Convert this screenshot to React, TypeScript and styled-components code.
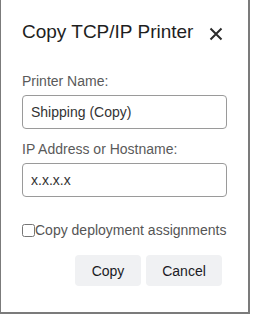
import React from "react";
import styled, { createGlobalStyle } from "styled-components";

const Global = createGlobalStyle`
  html, body { margin: 0; padding: 0; background: #fff; overflow: hidden; }
  body { font-family: "Liberation Sans", Arial, sans-serif; }
  * { box-sizing: border-box; }
`;

const Dialog = styled.div`
  width: 251px;
  height: 316px;
  margin: -2px 0 0 -1px;
  border: 2px solid #7b7b7b;
  background: #fff;
  padding: 18px 21px 0 21px;
  display: flex;
  flex-direction: column;
`;

const Header = styled.div`
  display: flex;
  align-items: center;
  justify-content: space-between;
  height: 28px;
`;

const Title = styled.h2`
  margin: 0;
  font-size: 19px;
  font-weight: 400;
  color: #1e1e1e;
`;

const CloseButton = styled.button`
  border: 0;
  background: none;
  padding: 0;
  margin-right: 4px;
  margin-top: 4px;
  width: 14px;
  height: 14px;
  display: flex;
  cursor: pointer;
`;

const Field = styled.div<{ $top: number }>`
  display: flex;
  flex-direction: column;
  margin-top: ${(p) => p.$top}px;
`;

const Label = styled.label`
  font-size: 14px;
  color: #5a5a5a;
  line-height: 16px;
  margin-bottom: 6px;
`;

const Input = styled.input`
  width: 205px;
  height: 34px;
  border: 1px solid #9a9a9a;
  border-radius: 4px;
  padding: 0 8px;
  font-family: "Liberation Sans", Arial, sans-serif;
  font-size: 14px;
  color: #333;
  outline: none;
`;

const CheckRow = styled.label`
  display: flex;
  align-items: center;
  margin-top: 25px;
  font-size: 14px;
  color: #555;
  line-height: 16px;
`;

const Check = styled.input`
  width: 13px;
  height: 13px;
  margin: 0;
`;

const Actions = styled.div`
  display: flex;
  justify-content: flex-end;
  gap: 5px;
  margin-top: 17px;
  padding-right: 5px;
`;

const Button = styled.button<{ $w: number }>`
  width: ${(p) => p.$w}px;
  height: 31px;
  border: 0;
  border-radius: 4px;
  background: #f0f1f3;
  font-family: "Liberation Sans", Arial, sans-serif;
  font-size: 14px;
  color: #1a1a24;
  cursor: pointer;
`;

export default function App() {
  return (
    <>
      <Global />
      <Dialog>
        <Header>
          <Title>Copy TCP/IP Printer</Title>
          <CloseButton aria-label="Close">
            <svg width="14" height="14" viewBox="0 0 14 14">
              <path d="M1.5 1.5 L12.5 12.5 M12.5 1.5 L1.5 12.5" stroke="#2b2b2b" strokeWidth="2" />
            </svg>
          </CloseButton>
        </Header>
        <Field $top={27}>
          <Label>Printer Name:</Label>
          <Input defaultValue="Shipping (Copy)" />
        </Field>
        <Field $top={12}>
          <Label>IP Address or Hostname:</Label>
          <Input defaultValue="x.x.x.x" />
        </Field>
        <CheckRow>
          <Check type="checkbox" />
          Copy deployment assignments
        </CheckRow>
        <Actions>
          <Button $w={66}>Copy</Button>
          <Button $w={76}>Cancel</Button>
        </Actions>
      </Dialog>
    </>
  );
}
